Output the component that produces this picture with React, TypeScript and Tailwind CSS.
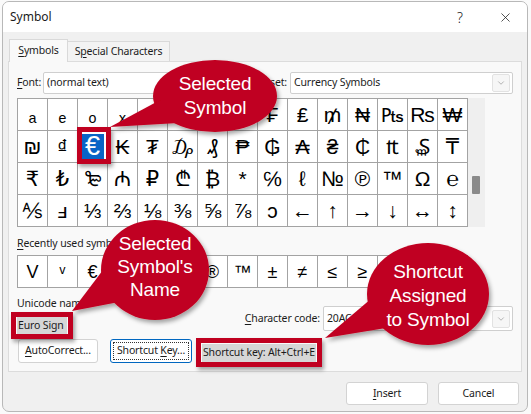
import { X, ChevronDown } from 'lucide-react';

const GRID = [
  ['ₐ', 'ₑ', 'ₒ', 'ₓ', 'ₔ', '₠', '₡', '₢', '₣', '₤', '₥', '₦', '₧', '₨', '₩'],
  ['₪', '₫', '€', '₭', '₮', '₯', '₰', '₱', '₲', '₳', '₴', '₵', '₶', '₷', '₸'],
  ['₹', '₺', '₻', '₼', '₽', '₾', '₿', '*', '℅', 'ℓ', '№', '℗', '™', 'Ω', '℮'],
  ['⅍', 'ⅎ', '⅓', '⅔', '⅛', '⅜', '⅝', '⅞', 'ↄ', '←', '↑', '→', '↓', '↔', '↕'],
];

const RECENT = ['V', 'ᵛ', '€', '', '', '', '®', '™', '±', '≠', '≤', '≥', '', '', ''];

function Select({ value, className }: { value: string; className: string }) {
  return (
    <div className={`flex items-center bg-white border border-[#cfcfcf] rounded-[2px] pl-[3px] pr-[2px] ${className}`}>
      <span className="flex-1 truncate">{value}</span>
      <span className="h-[18px] w-[18px] flex items-center justify-center bg-[#f6f6f6] border border-[#e2e2e2] rounded-[2px]">
        <ChevronDown className="h-[10px] w-[10px] text-[#8a8a8a]" strokeWidth={1.5} />
      </span>
    </div>
  );
}

export default function App() {
  return (
    <div className="relative w-[531px] h-[414px] bg-[#fafafa] overflow-hidden font-['Noto_Sans',sans-serif] text-[10.5px] tracking-[-0.15px] text-[#1b1b1b]">
      <div className="ml-[2px] mt-[1px] w-[526px] h-[411px] rounded-[7px] border border-[#b8b8b8] bg-[#f0f0f0] overflow-hidden flex flex-col">
        {/* Title bar */}
        <div className="h-[30px] shrink-0 bg-white flex items-center pl-[7px] pr-[14px] text-[12px] tracking-normal">
          <span>Symbol</span>
          <span className="ml-auto mr-[35px] text-[14px] font-light">?</span>
          <X className="h-[15px] w-[15px]" strokeWidth={1.2} />
        </div>

        <div className="pl-[5px] pt-[7px]">
          {/* Tabs */}
          <div className="flex items-end h-[22px] pl-[1px]">
            <div className="relative z-10 -mb-px h-[23px] w-[59px] flex items-center justify-center bg-[#f9f9f9] border border-b-0 border-[#d9d9d9]">
              <span><u className="underline-offset-2">S</u>ymbols</span>
            </div>
            <div className="h-[20px] w-[102px] flex items-center justify-center bg-[#f3f3f3] border border-l-0 border-b-0 border-[#d9d9d9]">
              <span>S<u className="underline-offset-2">p</u>ecial Characters</span>
            </div>
          </div>

          {/* Panel */}
          <div className="w-[514px] h-[311px] border border-[#dcdcdc] bg-[#f9f9f9] pl-[8px] pr-[8px] pt-[10px]">
            {/* Font / subset row */}
            <div className="flex items-center h-[22px]">
              <span className="w-[26px]"><u className="underline-offset-2">F</u>ont:</span>
              <Select value="(normal text)" className="w-[196px] h-[22px]" />
              <span className="ml-auto mr-[3px]">S<u className="underline-offset-2">u</u>bset:</span>
              <Select value="Currency Symbols" className="w-[223px] h-[22px]" />
            </div>

            {/* Symbol grid */}
            <div className="mt-[4px] flex">
              <div className="grid grid-cols-[repeat(15,29px)] auto-rows-[31px] gap-px bg-[#a3a3a3] border border-[#a3a3a3] font-['Liberation_Sans','DejaVu_Sans',sans-serif] tracking-normal text-black">
                {GRID.flat().map((ch, i) =>
                  ch === '€' ? (
                    <div key={i} className="bg-white p-[3px]">
                      <div className="h-full w-full bg-[#0a64c6] text-white text-[27px] leading-none flex items-center justify-center">
                        {ch}
                      </div>
                    </div>
                  ) : (
                    <div key={i} className="bg-white text-[21px] leading-none flex items-center justify-center overflow-hidden">
                      {ch}
                    </div>
                  )
                )}
              </div>
              <div className="w-[17px] h-[129px] bg-[#efefef] pl-[4px] pt-[78px]">
                <div className="w-[8px] h-[18px] bg-[#8a8a8a] rounded-[1px]" />
              </div>
            </div>

            <div className="mt-[9px] leading-[14px]">
              <u className="underline-offset-2">R</u>ecently used symbols:
            </div>
            <div className="mt-[5px] grid grid-cols-[repeat(15,29px)] auto-rows-[31px] gap-px bg-[#a3a3a3] border border-[#a3a3a3] w-[451px] font-['Liberation_Sans','DejaVu_Sans',sans-serif] tracking-normal text-black">
              {RECENT.map((ch, i) => (
                <div key={i} className="bg-white text-[18px] leading-none flex items-center justify-center">
                  {ch}
                </div>
              ))}
            </div>

            {/* Unicode name / character code */}
            <div className="mt-[8px] flex">
              <div className="flex flex-col items-start">
                <span className="leading-[14px]">Unicode name:</span>
                <span className="mt-[7px] h-[18px] bg-[#d6d6d6] pl-[1px] pr-[3px] flex items-center">Euro Sign</span>
              </div>
              <div className="ml-auto mt-[10px] flex items-center h-[25px]">
                <span className="mr-[3px]"><u className="underline-offset-2">C</u>haracter code:</span>
                <Select value="20AC" className="w-[190px] h-[25px]" />
              </div>
            </div>

            {/* Buttons */}
            <div className="mt-[4px] flex items-center h-[24px]">
              <div className="h-[24px] w-[80px] ml-px bg-white border border-[#d3d3d3] rounded-[3px] flex items-center justify-center">
                <span><u className="underline-offset-2">A</u>utoCorrect...</span>
              </div>
              <div className="h-[24px] w-[82px] ml-[12px] bg-white border border-[#0067c0] rounded-[3px] p-[2px]">
                <div className="h-full w-full border border-dotted border-[#333] flex items-center justify-center">
                  <span>Shortcut <u className="underline-offset-2">K</u>ey...</span>
                </div>
              </div>
              <span className="ml-[10px] h-[18px] mt-[4px] bg-[#d6d6d6] px-[1px] flex items-center">Shortcut key: Alt+Ctrl+E</span>
            </div>
          </div>

          {/* Insert / Cancel */}
          <div className="mt-[10px] flex justify-end pr-[8px] gap-[10px]">
            <div className="h-[23px] w-[82px] bg-white border border-[#d3d3d3] rounded-[3px] flex items-center justify-center">
              <span><u className="underline-offset-2">I</u>nsert</span>
            </div>
            <div className="h-[23px] w-[81px] bg-white border border-[#d3d3d3] rounded-[3px] flex items-center justify-center">
              Cancel
            </div>
          </div>
        </div>
      </div>

      {/* Annotation boxes */}
      <div className="absolute left-[77px] top-[127px] w-[34px] h-[37px] border-[5px] border-[#c00020] shadow-[2px_3px_4px_rgba(0,0,0,0.35)]" />
      <div className="absolute left-[11px] top-[312px] w-[62px] h-[27px] border-[5px] border-[#c00020] shadow-[2px_3px_4px_rgba(0,0,0,0.35)]" />
      <div className="absolute left-[196px] top-[338px] w-[126px] h-[29px] border-[5px] border-[#c00020] shadow-[2px_3px_4px_rgba(0,0,0,0.35)]" />

      {/* Callout shapes */}
      <svg className="pointer-events-none absolute left-0 top-0" width="531" height="414">
        <defs>
          <filter id="sh" x="-20%" y="-20%" width="150%" height="150%">
            <feDropShadow dx="2" dy="3" stdDeviation="2" floodColor="#000" floodOpacity="0.35" />
          </filter>
        </defs>
        <g filter="url(#sh)" fill="#c00020">
          <ellipse cx="215" cy="96" rx="62" ry="36" />
          <polygon points="110,127 162,99 178,123" />
        </g>
        <g filter="url(#sh)" fill="#c00020">
          <ellipse cx="155" cy="270" rx="54" ry="50" />
          <polygon points="72,311 106,266 119,302" />
        </g>
        <g filter="url(#sh)" fill="#c00020">
          <ellipse cx="428" cy="294" rx="61" ry="51" />
          <polygon points="325,338 372,298 386,328" />
        </g>
      </svg>

      {/* Callout texts */}
      <div className="absolute left-[153px] top-[72px] w-[124px] text-center text-white text-[19px] leading-[24px] font-['Liberation_Sans',Arial,sans-serif]">
        Selected<br />Symbol
      </div>
      <div className="absolute left-[101px] top-[232px] w-[108px] text-center text-white text-[19px] leading-[23px] font-['Liberation_Sans',Arial,sans-serif]">
        Selected<br />Symbol's<br />Name
      </div>
      <div className="absolute left-[367px] top-[260px] w-[122px] text-center text-white text-[19px] leading-[24px] font-['Liberation_Sans',Arial,sans-serif]">
        Shortcut<br />Assigned<br />to Symbol
      </div>
    </div>
  );
}
